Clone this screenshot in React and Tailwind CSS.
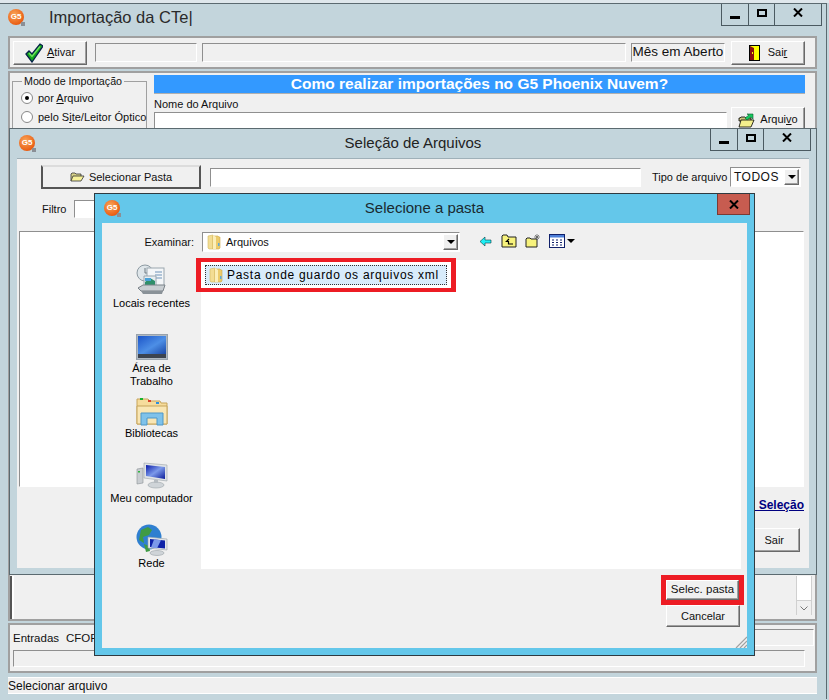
const sans = "font-['Liberation_Sans',Arial,sans-serif]";
const raised = "border border-t-white border-l-white border-r-[#696969] border-b-[#696969] shadow-[inset_-1px_-1px_0_#a0a0a0] bg-[#f0f0f0]";
const sunken = "border border-t-[#8f8f8f] border-l-[#8f8f8f] border-r-white border-b-white bg-white";
const sunkenFlat = "border border-t-[#8f8f8f] border-l-[#8f8f8f] border-r-white border-b-white bg-[#f0f0f0]";
const groove = "border-2 border-[#a0a0a0] bg-[#f0f0f0]";

function Logo() {
  return (
    <div className="relative flex h-4 w-4 shrink-0 items-center justify-center rounded-full bg-[radial-gradient(circle_at_40%_35%,#f9a65a,#ea5f14_70%,#d0480c)] text-[8px] font-bold leading-none text-white">
      G5
      <span className="absolute -bottom-px -right-px h-1 w-1 bg-[#8a8f96]" />
    </div>
  );
}

function WinControls({ className }) {
  return (
    <div className={`flex h-[22px] w-[101px] border border-t-0 border-[#4b5a61] ${className}`}>
      <div className="flex w-[27px] items-end justify-center border-r border-[#4b5a61] pb-1.5">
        <span className="h-[3px] w-[10px] bg-black" />
      </div>
      <div className="flex w-[26px] items-center justify-center border-r border-[#4b5a61] pb-1">
        <span className="h-[8px] w-[10px] border-2 border-black" />
      </div>
      <div className="flex flex-1 items-center justify-center pb-1">
        <svg width="10" height="9" viewBox="0 0 10 9"><path d="M1 .5 9 8.5M9 .5 1 8.5" stroke="#000" strokeWidth="2" /></svg>
      </div>
    </div>
  );
}

function Check() {
  return (
    <svg width="18" height="20" viewBox="0 0 18 20">
      <path d="M1 11 4 8l3 3 8-10 3 2L7 19z" fill="#12a81a" stroke="#06204a" strokeWidth="1.300" />
      <path d="M4 10l3 3.500 8-10" fill="none" stroke="#6fe060" strokeWidth="1.400" />
    </svg>
  );
}

function Door() {
  return (
    <svg width="11" height="16" viewBox="0 0 11 16">
      <rect x=".5" y=".5" width="10" height="15" fill="#ffff00" stroke="#000" />
      <path d="M1 1l4 2v12H1z" fill="#8b1010" />
      <rect x="3" y="7" width="1" height="2" fill="#ffff00" />
    </svg>
  );
}

function ArrowFolder() {
  return (
    <svg width="17" height="17" viewBox="0 0 17 17">
      <path d="M1 7h1l1-1h4l1 1h5v3H1z" fill="#c9c27a" stroke="#000" strokeWidth=".8" />
      <path d="M1 16l2-7h13l-3 7z" fill="#f4f08c" stroke="#000" strokeWidth=".8" />
      <path d="M7 7l4-3-2-1h6v5l-2-2-4 3z" fill="#16c95f" stroke="#0a5a2c" strokeWidth=".6" />
    </svg>
  );
}

function SmallOpenFolder() {
  return (
    <svg width="15" height="10" viewBox="0 0 15 10">
      <path d="M1 9V2l1-1h3l1 1h5v2" fill="#d8d38a" stroke="#333" strokeWidth=".8" />
      <path d="M1 9l2-5h11l-3 5z" fill="#f7f29a" stroke="#333" strokeWidth=".8" />
    </svg>
  );
}

function ShellFolder() {
  return (
    <svg width="14" height="16" viewBox="0 0 14 16">
      <path d="M1 2l5-1v14H2l-1-1z" fill="#f3dd93" stroke="#d4b85e" strokeWidth=".6" />
      <path d="M6 2h5l1 1 1 0v11l-1 1H6z" fill="#eccb6b" stroke="#cdaa4c" strokeWidth=".6" />
      <path d="M6 1l3 2v12H6z" fill="#fbeeb8" />
      <rect x="11" y="9" width="1.500" height="3" fill="#5aa8dc" />
    </svg>
  );
}

function Recent() {
  return (
    <svg width="32" height="32" viewBox="0 0 32 32">
      <circle cx="9" cy="9" r="8" fill="#dfe6ea" stroke="#8d9aa2" />
      <path d="M9 4v5h4" fill="none" stroke="#6e7a82" />
      <rect x="11" y="4" width="17" height="18" fill="#f4f6f8" stroke="#9aa6ae" />
      <path d="M19 8h7M19 11h7M19 14h7" stroke="#6f93b8" />
      <path d="M8 12h12v10H8z" fill="#e8eef2" stroke="#9aa6ae" />
      <path d="M9 18l5-4 5 3v4H9z" fill="#2f8f6a" />
      <path d="M9 14h6v3H9z" fill="#4aa2d8" />
      <path d="M2 24l5-3h22l-2 6H5z" fill="#c9ced2" stroke="#7a8288" />
      <path d="M5 27h22l-1 3H7z" fill="#8a9298" />
    </svg>
  );
}

function Desktop() {
  return (
    <svg width="32" height="26" viewBox="0 0 32 26">
      <defs>
        <linearGradient id="desk" x1="0" y1="0" x2="1" y2="1">
          <stop offset="0" stopColor="#1c55c8" />
          <stop offset=".55" stopColor="#4d8fe6" />
          <stop offset="1" stopColor="#1a48a8" />
        </linearGradient>
      </defs>
      <rect x=".5" y=".5" width="31" height="25" fill="#aeb8c2" stroke="#98a2ac" />
      <rect x="2" y="2" width="28" height="18" fill="url(#desk)" />
      <rect x="2" y="20" width="28" height="4" fill="#3c4450" />
    </svg>
  );
}

function Libraries() {
  return (
    <svg width="32" height="29" viewBox="0 0 32 29">
      <path d="M1 27V2h11l2 2h10l1 2h6v21z" fill="#f6dc9c" stroke="#c6a45a" />
      <rect x="4" y="1" width="3" height="2" fill="#18b32c" />
      <rect x="12" y="3" width="3" height="2" fill="#d9402a" />
      <rect x="20" y="5" width="3" height="2" fill="#2a8fe0" />
      <path d="M1 9h30v18H1z" fill="#f9e6b4" stroke="#c6a45a" />
      <path d="M5 28V16h22v12h-6v-7H11v7z" fill="#7fc2ea" stroke="#4f97c8" />
    </svg>
  );
}

function Monitor() {
  return (
    <svg width="32" height="28" viewBox="0 0 32 28">
      <defs>
        <linearGradient id="scr" x1="0" y1="0" x2="1" y2="1">
          <stop offset="0" stopColor="#0a1aa8" />
          <stop offset=".5" stopColor="#7c9aea" />
          <stop offset="1" stopColor="#0a1a98" />
        </linearGradient>
      </defs>
      <path d="M1 8l6-1v15l-6 1z" fill="#c9cdd1" stroke="#8a9096" strokeWidth=".6" />
      <rect x="2" y="10" width="2" height="1.500" fill="#2fb53f" />
      <path d="M8 2l23 2v16L8 17z" fill="#dfe3e6" stroke="#9aa2a8" strokeWidth=".6" />
      <path d="M10 4l19 2v12L10 15z" fill="url(#scr)" />
      <ellipse cx="20" cy="24" rx="8" ry="3" fill="#cfd4d8" stroke="#9aa2a8" strokeWidth=".6" />
      <rect x="18" y="19" width="4" height="3" fill="#b6bcc1" />
    </svg>
  );
}

function Network() {
  return (
    <svg width="32" height="32" viewBox="0 0 32 32">
      <circle cx="13" cy="13" r="12.500" fill="#2f7fd0" />
      <path d="M5 6l7-3 4 3-3 5-6 2 1 6-5-3zM8 20l5 2 1 5-4 1z" fill="#3f9b45" />
      <path d="M12 13l19 2v11l-19-2z" fill="#e3e6e8" stroke="#9aa2a8" strokeWidth=".6" />
      <path d="M14 15l15 1.500v8L14 23z" fill="#0e22a8" />
      <path d="M18 15.500l7 .8-4 8-6-.8z" fill="#7c9aea" />
      <ellipse cx="21" cy="29" rx="7" ry="2.500" fill="#cfd4d8" stroke="#9aa2a8" strokeWidth=".6" />
    </svg>
  );
}

function ToolIcons() {
  return (
    <div className="flex items-center">
      <svg width="13" height="11" viewBox="0 0 13 11" className="ml-[19px]">
        <path d="M1 5.500 6 1v3h6v3H6v3z" fill="#1ff0f5" stroke="#0a3a40" strokeWidth=".6" />
      </svg>
      <svg width="16" height="14" viewBox="0 0 16 14" className="ml-[9px]">
        <path d="M1 13V2l1-1h4l1 2h8v10z" fill="#f7f27c" stroke="#222" />
        <path d="M8 5 5.500 7.500H7.500V10H12" fill="none" stroke="#000" strokeWidth="1.200" />
      </svg>
      <svg width="16" height="14" viewBox="0 0 16 14" className="ml-[8px]">
        <path d="M1 13V5l1-1h3l1 1h6v8z" fill="#f7f27c" stroke="#222" />
        <path d="M12 0v6M9 3h6M10 1l4 4M14 1l-4 4" stroke="#555" strokeWidth=".7" />
      </svg>
      <svg width="16" height="14" viewBox="0 0 16 14" className="ml-[8px]">
        <rect x=".5" y=".5" width="15" height="13" fill="#fff" stroke="#10206a" />
        <rect x="1" y="1" width="14" height="2.500" fill="#4d7fd8" />
        <path d="M3 6h2M7 6h2M11 6h2M3 8.500h2M7 8.500h2M11 8.500h2M3 11h2M7 11h2M11 11h2" stroke="#10206a" />
      </svg>
      <span className="ml-0.5 h-0 w-0 border-x-[4px] border-t-[4px] border-x-transparent border-t-black" />
    </div>
  );
}

function ComboArrow() {
  return (
    <div className={`flex h-[16px] w-[15px] items-center justify-center ${raised}`}>
      <span className="h-0 w-0 border-x-[4px] border-t-[4px] border-x-transparent border-t-black" />
    </div>
  );
}

function PlaceItem({ icon, label, className }) {
  return (
    <div className={`flex flex-col items-center text-center leading-[13px] text-black ${className}`}>
      {icon}
      {label}
    </div>
  );
}

export default function App() {
  return (
    <div className={`relative h-[700px] w-[829px] overflow-hidden bg-[#c3d5dc] text-[11px] text-[#111] ${sans}`}>
      {/* janela principal */}
      <div className="h-[3px] bg-[#dfe7ec]" />
      <div className="mr-[2px] flex h-[696px] flex-col border-r border-t border-[#5b6a70] pl-2">
        <div className="flex h-[30px] shrink-0 items-center pb-1">
          <Logo />
          <span className="ml-[25px] text-[16.5px] text-[#2a2a2a]">Importação da CTe|</span>
          <WinControls className="ml-auto mr-[4px] self-start" />
        </div>

        <div className={`mt-[2px] flex h-[33px] w-[809px] shrink-0 items-center ${groove}`}>
          <button className={`ml-[3px] flex h-[24px] w-[74px] items-center justify-center gap-1 ${raised}`}>
            <Check />
            <span><u>A</u>tivar</span>
          </button>
          <div className={`ml-[8px] h-[19px] w-[102px] ${sunkenFlat}`} />
          <div className={`ml-[5px] h-[19px] w-[424px] ${sunkenFlat}`} />
          <div className={`ml-[5px] flex h-[19px] w-[94px] items-center justify-center whitespace-nowrap text-[13.5px] ${sunkenFlat}`}>Mês em Aberto</div>
          <button className={`ml-[6px] flex h-[24px] w-[74px] items-center justify-center gap-2 ${raised}`}>
            <Door />
            <span>Sai<u>r</u></span>
          </button>
        </div>

        <div className={`mt-[2px] flex h-[550px] w-[809px] shrink-0 flex-col justify-between ${groove}`}>
          <div className="flex pl-[2px] pt-[2px]">
            <fieldset className="h-[60px] w-[135px] min-w-0 shrink-0 border border-[#a0a0a0] pl-[8px]">
              <legend className="ml-[1px] px-[2px] text-[10.7px] leading-[12px] whitespace-nowrap">Modo de Importação</legend>
              <div className="flex items-center gap-[5px] pt-[3px]">
                <span className="flex h-[12px] w-[12px] items-center justify-center rounded-full border border-[#888] bg-white">
                  <span className="h-1 w-1 rounded-full bg-black" />
                </span>
                <span>por <u>A</u>rquivo</span>
              </div>
              <div className="flex items-center gap-[5px] pt-[2px] whitespace-nowrap">
                <span className="h-[12px] w-[12px] shrink-0 rounded-full border border-[#888] bg-white" />
                <span>pelo S<u>i</u>te/Leitor Óptico</span>
              </div>
            </fieldset>
            <div className="ml-[7px] w-[651px]">
              <div className="flex h-[19px] items-center justify-center border-b border-[#b0b0b0] bg-[#3399ff] text-[15.5px] font-bold text-white">
                Como realizar importações no G5 Phoenix Nuvem?
              </div>
              <div className="flex">
                <div className="flex-1">
                  <div className="mt-[2px] leading-[16px]">Nome do Arquivo</div>
                  <div className={`mr-[4px] h-[20px] ${sunken}`} />
                </div>
                <button className={`mt-[13px] flex h-[24px] w-[74px] items-center justify-center gap-[5px] ${raised}`}>
                  <ArrowFolder />
                  <span>Arqui<u>v</u>o</span>
                </button>
              </div>
            </div>
          </div>

          <div className="flex h-[43px] justify-end border-l-2 border-[#555] bg-[#f0f0f0] pr-[3px] pb-[4px] shadow-[inset_2px_0_0_#fff]">
            <div className="flex w-[16px] flex-col justify-end border-x border-[#d0d0d0] bg-white">
              <div className="flex h-[15px] items-center justify-center border-t border-[#d0d0d0] bg-[#f0f0f0]">
                <svg width="8" height="5" viewBox="0 0 8 5"><path d="M.5.500 4 4 7.500.500" fill="none" stroke="#777" /></svg>
              </div>
            </div>
          </div>
        </div>

        <div className={`mt-[2px] flex h-[50px] w-[809px] shrink-0 flex-col ${groove}`}>
          <div className="flex h-[25px] items-center">
            <span className="ml-[3px] pt-[2px] text-[11.5px] whitespace-nowrap">Entradas<span className="ml-[7px]">CFOP</span></span>
            <div className={`ml-auto mr-[1px] h-[17px] w-[400px] ${sunkenFlat}`} />
          </div>
          <div className={`ml-[3px] h-[17px] w-[792px] ${sunkenFlat}`} />
        </div>

        <div className="mt-[4px] flex h-[17px] w-[809px] shrink-0 items-center border-y border-white bg-[#f0f0f0] text-[12px]">
          Selecionar arquivo
        </div>
      </div>

      {/* seleção de arquivos */}
      <div className="absolute left-[9px] top-[128px] flex h-[447px] w-[808px] flex-col border border-[#5b6a70] bg-[#c3d5dc]">
        <div className="relative flex h-[29px] shrink-0 items-center justify-center">
          <div className="absolute left-[9px] top-[6px]"><Logo /></div>
          <span className="text-[15px] text-[#222]">Seleção de Arquivos</span>
          <WinControls className="absolute right-[5px] top-0" />
        </div>
        <div className="mx-[7px] flex h-[410px] flex-col border-t border-[#9fb0b8] bg-[#f0f0f0]">
          <div className="flex items-center pt-[6px]">
            <button className="ml-[24px] flex h-[24px] w-[160px] items-center justify-center gap-[4px] border-2 border-t-[#dcdcdc] border-l-[#555] border-r-[#555] border-b-[#555] bg-[#f0f0f0]">
              <SmallOpenFolder />
              <span>Selecionar Pasta</span>
            </button>
            <div className={`ml-[9px] h-[19px] w-[431px] ${sunken}`} />
            <span className="ml-[11px] w-[78px] whitespace-nowrap">Tipo de arquivo</span>
            <div className={`flex h-[20px] w-[71px] items-center justify-between pr-px pl-[3px] ${sunken}`}>
              <span className="text-[12px] tracking-[.5px]">TODOS</span>
              <ComboArrow />
            </div>
          </div>
          <div className="mt-[11px] flex h-[18px] items-center">
            <span className="ml-[25px] w-[32px]">Filtro</span>
            <div className={`h-[18px] w-[80px] ${sunken}`} />
          </div>
          <div className={`ml-[2px] mt-[13px] h-[256px] w-[785px] ${sunken}`} />
          <div className="mt-[9px] w-[787px] text-right text-[12px] font-bold text-[#000080] underline">
            &nbsp;&nbsp;&nbsp;&nbsp;Seleção
          </div>
          <div className="mt-[14px] flex w-[783px] justify-end">
            <button className={`flex h-[24px] w-[70px] items-center justify-end gap-[10px] pr-[15px] ${raised}`}>
              <Door />
              <span>Sair</span>
            </button>
          </div>
        </div>
      </div>

      {/* selecione a pasta */}
      <div className="absolute left-[94px] top-[193px] flex h-[463px] w-[661px] flex-col border border-[#2f3a40] bg-[#64c7ea]">
        <div className="relative flex h-[29px] shrink-0 items-center justify-center">
          <div className="absolute left-[9px] top-[6px]"><Logo /></div>
          <span className="text-[15px] text-[#1a2a30]">Selecione a pasta</span>
          <div className="absolute right-[4px] top-0 flex h-[21px] w-[33px] items-center justify-center border border-t-0 border-[#7a3a34] bg-[#c75c50]">
            <svg width="10" height="9" viewBox="0 0 10 9"><path d="M1 .5 9 8.500M9 .5 1 8.500" stroke="#000" strokeWidth="2" /></svg>
          </div>
        </div>
        <div className="relative mx-[7px] flex h-[425px] flex-col bg-[#f0f0f0]">
          <div className="flex h-[37px] shrink-0 items-start pt-[9px]">
            <span className="w-[92px] pt-[2px] text-right">Examinar:</span>
            <div className={`ml-[8px] flex h-[20px] w-[258px] items-center justify-between pr-px pl-[4px] ${sunken}`}>
              <span className="flex items-center gap-[5px]"><ShellFolder />Arquivos</span>
              <ComboArrow />
            </div>
            <div className="pt-[2px]"><ToolIcons /></div>
          </div>
          <div className="flex h-[309px] shrink-0">
            <div className="w-[99px] shrink-0">
              <PlaceItem className="mt-[4px]" icon={<Recent />} label={<span className="mt-[1px]">Locais recentes</span>} />
              <PlaceItem className="mt-[24px]" icon={<Desktop />} label={<span className="mt-[2px]">Área de<br />Trabalho</span>} />
              <PlaceItem className="mt-[9px]" icon={<Libraries />} label={<span className="mt-[1px]">Bibliotecas</span>} />
              <PlaceItem className="mt-[21px]" icon={<Monitor />} label={<span className="mt-[3px]">Meu computador</span>} />
              <PlaceItem className="mt-[19px]" icon={<Network />} label={<span className="mt-[1px]">Rede</span>} />
            </div>
            <div className="w-[540px] bg-white">
              <div className="-ml-[5px] -mt-[2px] h-[34px] w-[260px] border-x-[5px] border-y-4 border-[#ed1c24] bg-white pl-[4px] pt-[3px]">
                <div className="flex h-[20px] w-[242px] items-center gap-[4px] border border-dotted border-[#333] bg-[#d8ecfb] pl-[3px] whitespace-nowrap text-[12px] tracking-[.72px] text-black">
                  <ShellFolder />
                  Pasta onde guardo os arquivos xml
                </div>
              </div>
            </div>
          </div>
          <div className="ml-[559px] mt-[6px] h-[30px] w-[83px] border-[5px] border-[#ed1c24]">
            <button className={`h-full w-full text-[11.5px] ${raised}`}>Selec. pasta</button>
          </div>
          <button className={`ml-[564px] h-[22px] w-[74px] ${raised}`}>Cancelar</button>
          <svg width="12" height="12" viewBox="0 0 12 12" className="absolute bottom-0 right-0">
            <path d="M12 1 1 12M12 5 5 12M12 9 9 12" stroke="#a0a0a0" strokeWidth="1.200" />
          </svg>
        </div>
      </div>
    </div>
  );
}
